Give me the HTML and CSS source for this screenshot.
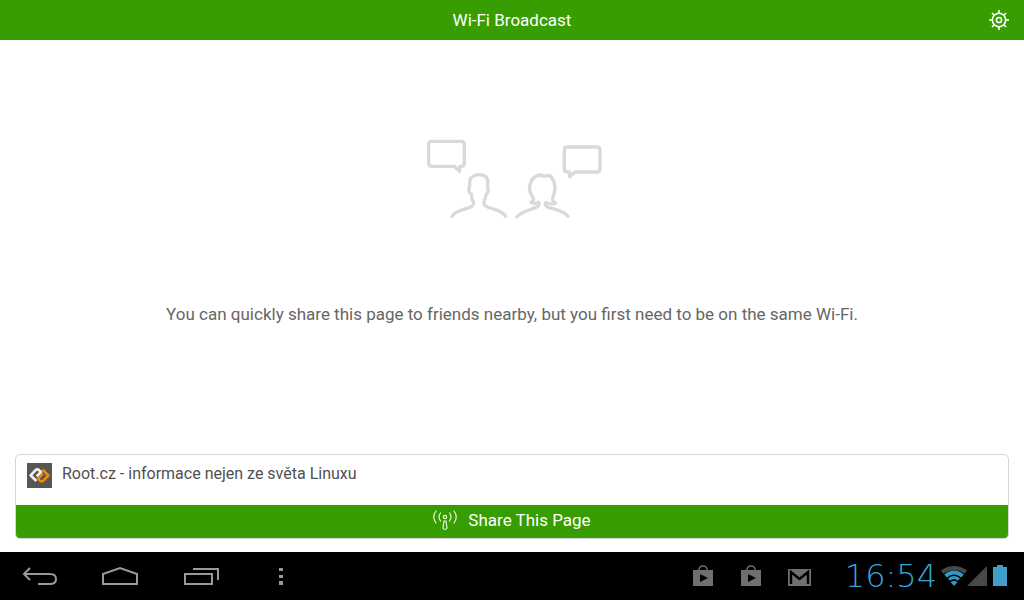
FILE: index.html
```html
<!DOCTYPE html>
<html lang="en">
<head>
<meta charset="utf-8">
<title>Wi-Fi Broadcast</title>
<link rel="stylesheet" href="styles.css">
</head>
<body>
<header class="topbar">
  <h1 class="title">Wi-Fi Broadcast</h1>
  <button class="settings" aria-label="Settings">
    <svg width="20" height="20" viewBox="0 0 20 20" fill="none" stroke="#fff">
      <circle cx="10" cy="10" r="6.7" stroke-width="1.6"/>
      <circle cx="10" cy="10" r="2.6" stroke-width="1.5"/>
      <path stroke-width="1.6" d="M10 0v3M10 17v3M0 10h3M17 10h3M3 3l2.2 2.2M14.8 14.8L17 17M17 3l-2.2 2.2M5.2 14.8L3 17"/>
    </svg>
  </button>
</header>
<main class="content">
  <section class="intro">
    <svg class="people" width="210" height="105" viewBox="-9 0 630 315" fill="none" stroke="#d9d9d9" stroke-width="10" stroke-linecap="round" stroke-linejoin="round">
      <path d="M65 49H154Q163 49 163 58V115Q163 124 154 124H149V139L132 124H65Q56 124 56 115V58Q56 49 65 49Z"/>
      <path d="M472 66H561Q570 66 570 75V132Q570 141 561 141H495L479 155V141H472Q463 141 463 132V75Q463 66 472 66Z"/>
      <path d="M126 274C136 256 170 252 184 245C193 240 192 232 187 225C184 218 186 213 184 207C177 205 176 198 177 189C181 181 178 174 180 164C181 157 187 156 191 153C200 147 218 148 226 154C234 161 235 168 233 178C231 186 236 187 235 194C234 202 232 206 228 208C228 216 227 221 223 227C219 237 222 242 232 246C250 252 278 257 287 274"/>
      <path d="M320 276C333 260 356 256 376 248C387 244 389 238 386 232C379 236 370 236 363 232C370 229 372 223 369 217C359 204 357 192 360 179C364 164 373 153 388 150C397 151 401 155 407 153C417 149 423 153 427 161C435 173 437 187 433 202C431 214 426 218 428 225C430 231 434 232 437 235C427 238 417 237 408 232C402 238 408 245 418 248C440 255 464 259 474 274"/>
    </svg>
    <p class="message">You can quickly share this page to friends nearby, but you first need to be on the same Wi-Fi.</p>
  </section>
  <section class="card">
    <div class="page">
      <svg width="25" height="25" viewBox="0 0 75 75" fill="none" stroke-width="8" stroke-linejoin="round">
        <path fill="#575752" d="M0 0h75v75H0z"/>
        <path stroke="#f4f4f4" d="M28 54L11 37L25 22Q31 16 37 22L42 27L29 40"/>
        <path stroke="#ef8b0e" d="M47 20L64 37L50 52Q44 58 38 52L33 47L48 32"/>
      </svg>
      <span lang="cs">Root.cz - informace nejen ze světa Linuxu</span>
    </div>
    <button class="share">
      <svg width="24" height="22" viewBox="0 0 24 22" fill="none" stroke="#e8f6df" stroke-width="1.2" stroke-linecap="round">
        <circle cx="12" cy="8" r="1.7"/>
        <path d="M11 12h2l1 7q-2 3-4 0zM7.500 4Q4.500 8 7.500 12M16.500 4Q19.500 8 16.500 12M3 2Q-1.500 8 3 14M21 2Q25.500 8 21 14"/>
      </svg>
      <span>Share This Page</span>
    </button>
  </section>
</main>
<nav class="system">
  <div class="keys">
    <button aria-label="Back"><svg width="36" height="20" viewBox="0 0 36 20" fill="none" stroke="#999" stroke-width="2"><path d="M8 2L2 8l6 6M2 8h26q6 0 6 5t-6 5H16"/></svg></button>
    <button aria-label="Home"><svg width="36" height="20" viewBox="0 0 36 20" fill="none" stroke="#999" stroke-width="2"><path d="M0 18V8l17-6 17 6v10z"/></svg></button>
    <button aria-label="Recent apps"><svg width="36" height="20" viewBox="0 0 36 20" fill="none" stroke="#999" stroke-width="2"><path d="M1 8h27v10H1zM9 3h25v11"/></svg></button>
    <button aria-label="Menu"><svg width="36" height="20" viewBox="0 0 36 20" fill="#999"><path d="M14 2h4v3h-4zM14 9h4v3h-4zM14 15h4v4h-4z"/></svg></button>
  </div>
  <div class="notices">
    <svg width="24" height="24" viewBox="0 0 24 24"><path fill="none" stroke="#6f706e" stroke-width="1.400" d="M8 6Q8 2 12 2t4 4"/><path fill="#6f706e" fill-rule="evenodd" d="M2 6h20v16H2zM9 10v8l8-4z"/></svg>
    <svg width="24" height="24" viewBox="0 0 24 24"><path fill="none" stroke="#6f706e" stroke-width="1.400" d="M8 6Q8 2 12 2t4 4"/><path fill="#6f706e" fill-rule="evenodd" d="M2 6h20v16H2zM9 10v8l8-4z"/></svg>
    <svg width="24" height="24" viewBox="0 0 24 24"><path fill="#6f706e" d="M1 5h23v17H1z"/><path fill="none" stroke="#000" stroke-width="2.400" d="M4 20V8l8.500 7L21 8v12"/></svg>
  </div>
  <time class="clock">16:54</time>
  <div class="status">
    <svg width="26" height="22" viewBox="0 0 26 22" fill="none"><path stroke="#484848" d="M1 7Q13-1 25 7" stroke-width="4"/><path stroke="#319bc8" stroke-width="4" d="M4.500 11Q13 4 21.500 11"/><path stroke="#319bc8" stroke-width="3" d="M8 14.500Q13 10.500 18 14.500"/><path fill="#319bc8" d="M9.500 17q3.500-2 7 0L13 21z"/></svg>
    <svg width="20" height="22" viewBox="0 0 20 22"><path fill="#484848" d="M20 1v20H0z"/></svg>
    <svg width="14" height="22" viewBox="0 0 14 22"><path fill="#3f9fc9" d="M4 0h6v2h4v19H0V2h4z"/></svg>
  </div>
</nav>
</body>
</html>
```
FILE: styles.css
```css
* { box-sizing: border-box; }
body {
  margin: 0;
  min-height: 100vh;
  display: flex;
  flex-direction: column;
  background: #fff;
  font-family: Roboto, "Noto Sans", sans-serif;
}
button {
  border: 0;
  padding: 0;
  background: none;
  font: inherit;
  color: inherit;
}
svg { display: block; flex: none; }
.topbar {
  height: 40px;
  padding: 0 15px;
  display: grid;
  grid-template-columns: 20px 1fr 20px;
  align-items: center;
  background: #389d00;
  color: #fff;
}
.title {
  grid-column: 2;
  margin: 0;
  text-align: center;
  font-size: 17px;
  font-weight: 400;
}
.content {
  flex: 1;
  display: flex;
  flex-direction: column;
  padding: 0 15px 13px;
}
.intro {
  flex: 1;
  display: flex;
  flex-direction: column;
  align-items: center;
  padding-top: 85px;
}
.message {
  margin: 72px 0 0;
  font-size: 17px;
  line-height: 24px;
  text-align: center;
  color: #666;
}
.card {
  border: 1px solid #d6d6d6;
  border-radius: 5px;
  overflow: hidden;
}
.page {
  display: flex;
  gap: 10px;
  padding: 8px 11px 17px;
  font-size: 16px;
  line-height: 22px;
  color: #505050;
}
.share {
  width: 100%;
  height: 33px;
  display: flex;
  align-items: center;
  justify-content: center;
  gap: 11px;
  padding-bottom: 4px;
  background: #389d00;
  color: #fff;
  font-size: 17px;
}
.system {
  height: 48px;
  display: flex;
  align-items: center;
  padding: 0 17px 0 22px;
  background: #000;
}
.keys { display: flex; gap: 45px; }
.keys svg { overflow: visible; }
.notices {
  display: flex;
  gap: 24px;
  margin-left: auto;
}
.clock {
  width: 126px;
  text-align: right;
  font-family: "DejaVu Sans", sans-serif;
  font-size: 32px;
  font-weight: 200;
  color: #33a5d3;
}
.status { display: flex; margin-left: 4px; }
.status svg:last-child { margin-left: 6px; }
```
